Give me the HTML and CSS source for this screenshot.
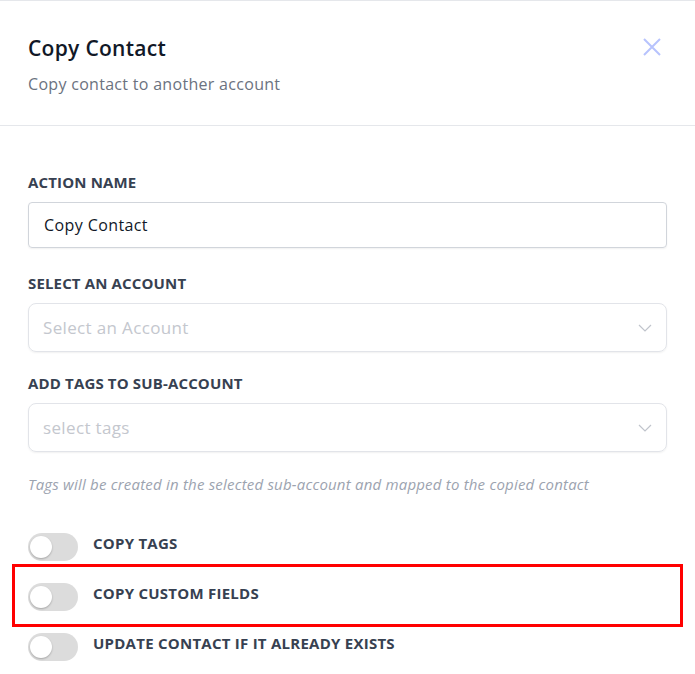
FILE: index.html
```html
<!DOCTYPE html>
<html>
<head>
<meta charset="utf-8">
<link rel="stylesheet" href="styles.css">
</head>
<body>
<div class="panel">
  <div class="header">
    <div class="heading">
      <h1 class="title">Copy Contact</h1>
      <p class="subtitle">Copy contact to another account</p>
    </div>
    <button class="close" aria-label="Close">
      <svg width="18" height="18" viewBox="0 0 18 18"><path d="M1 1L17 17M17 1L1 17" stroke="#b7c3fd" stroke-width="2" fill="none"/></svg>
    </button>
  </div>
  <div class="body">
    <div class="field">
      <label class="label">ACTION NAME</label>
      <div class="input">Copy Contact</div>
    </div>
    <div class="field gap-a">
      <label class="label">SELECT AN ACCOUNT</label>
      <div class="select"><span class="placeholder">Select an Account</span>
        <svg class="chev" width="14" height="8" viewBox="0 0 14 8"><path d="M1 1L7 7L13 1" stroke="#c0c4cc" stroke-width="1.2" fill="none"/></svg>
      </div>
    </div>
    <div class="field gap-b">
      <label class="label">ADD TAGS TO SUB-ACCOUNT</label>
      <div class="select"><span class="placeholder">select tags</span>
        <svg class="chev" width="14" height="8" viewBox="0 0 14 8"><path d="M1 1L7 7L13 1" stroke="#c0c4cc" stroke-width="1.2" fill="none"/></svg>
      </div>
    </div>
    <p class="help">Tags will be created in the selected sub-account and mapped to the copied contact</p>
    <div class="toggles">
      <div class="row"><span class="switch"><span class="knob"></span></span><span class="row-label">COPY TAGS</span></div>
      <div class="row highlighted"><span class="switch"><span class="knob"></span></span><span class="row-label">COPY CUSTOM FIELDS</span><span class="highlight"></span></div>
      <div class="row"><span class="switch"><span class="knob"></span></span><span class="row-label">UPDATE CONTACT IF IT ALREADY EXISTS</span></div>
    </div>
  </div>
</div>
</body>
</html>
```

FILE: styles.css
```css
* { box-sizing: border-box; }
body {
  margin: 0;
  background: #fff;
  font-family: "Open Sans", "Noto Sans", sans-serif;
  color: #1f2937;
}
.panel {
  border-top: 1px solid #e5e7eb;
  width: 695px;
}
.header {
  display: flex;
  justify-content: space-between;
  align-items: flex-start;
  padding: 33px 34px 29px 28px;
  border-bottom: 1px solid #e5e7eb;
}
.title {
  margin: 0;
  font-size: 21px;
  line-height: 28px;
  font-weight: 600;
  color: #111827;
  letter-spacing: 0.3px;
}
.subtitle {
  margin: 10px 0 0;
  font-size: 16px;
  line-height: 24px;
  color: #6b7280;
  letter-spacing: 0.3px;
}
.close {
  background: none;
  border: 0;
  padding: 0;
  margin-top: 4px;
  width: 18px;
  height: 18px;
  display: flex;
}
.body {
  padding: 46px 28px 0;
}
.field {
  display: flex;
  flex-direction: column;
  gap: 10px;
}
.gap-a { margin-top: 25px; }
.gap-b { margin-top: 21px; }
.label {
  font-size: 15px;
  line-height: 20px;
  font-weight: 700;
  color: #374151;
  letter-spacing: 0.15px;
}
.input {
  height: 46px;
  border: 1px solid #d1d5db;
  border-radius: 4px;
  box-shadow: 0 1px 2px rgba(0,0,0,0.06);
  padding: 0 15px;
  display: flex;
  align-items: center;
  font-size: 16px;
  letter-spacing: 0.4px;
  color: #111827;
}
.select {
  height: 49px;
  border: 1px solid #e2e4e9;
  border-radius: 8px;
  box-shadow: 0 1px 2px rgba(0,0,0,0.06);
  padding: 0 14px;
  display: flex;
  align-items: center;
  justify-content: space-between;
  font-size: 17px;
  letter-spacing: 0.35px;
}
.placeholder { color: #c4c7ce; }
.help {
  margin: 22px 0 0;
  font-size: 15px;
  line-height: 20px;
  font-style: italic;
  color: #9ca3af;
  letter-spacing: 0.2px;
}
.toggles {
  margin-top: 39px;
  display: flex;
  flex-direction: column;
  gap: 22px;
}
.row {
  position: relative;
  display: flex;
  align-items: center;
  gap: 15px;
  height: 28px;
}
.switch {
  width: 50px;
  height: 28px;
  border-radius: 14px;
  background: #dcdcdc;
  position: relative;
  flex: none;
}
.knob {
  position: absolute;
  left: 2px;
  top: 3px;
  width: 22px;
  height: 22px;
  border-radius: 50%;
  background: #fff;
  box-shadow: 0 1px 2px rgba(0,0,0,0.25);
}
.row-label {
  font-size: 15px;
  line-height: 20px;
  font-weight: 700;
  color: #374151;
  letter-spacing: 0.25px;
  padding-bottom: 9px;
}
.highlight {
  position: absolute;
  left: -16px;
  right: -16px;
  top: -19px;
  bottom: -16px;
  border: 3px solid #ff0000;
  pointer-events: none;
}
```
